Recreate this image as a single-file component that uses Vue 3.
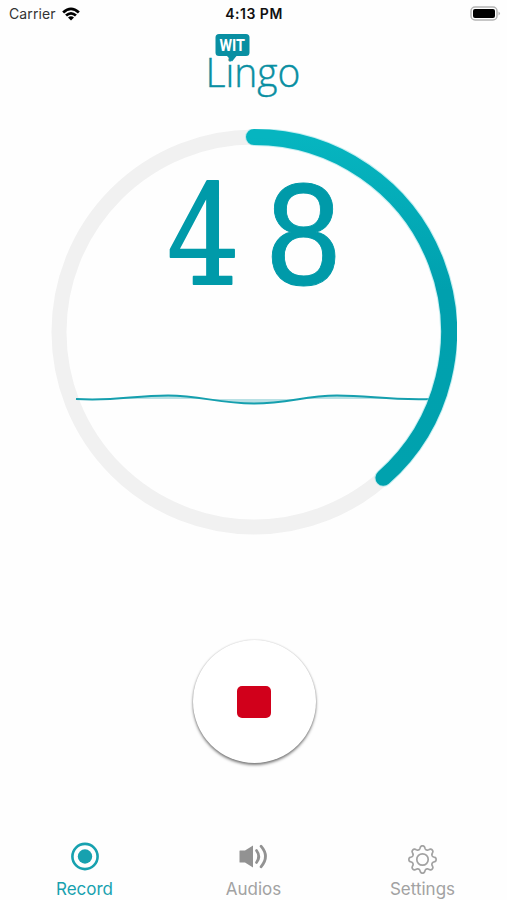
<template>
  <div class="screen">
    <header class="status-bar">
      <div class="carrier">
        <span>Carrier</span>
        <svg class="wifi" viewBox="0 0 18 14">
          <path d="M0.2 4.4 Q9 -3.6 17.8 4.4 L15.9 6.4 Q9 0.2 2.1 6.4 Z" />
          <path d="M3.1 7.5 Q9 2.3 14.9 7.5 L13 9.5 Q9 5.9 5 9.5 Z" />
          <path d="M6 10.5 Q9 8 12 10.5 L9 13.6 Z" />
        </svg>
      </div>
      <div class="clock">4:13 PM</div>
      <div class="battery-wrap">
        <svg class="battery" viewBox="0 0 31 16">
          <rect x="1" y="1" width="26" height="13" rx="4" fill="#fff" stroke="#b4b4b4" stroke-width="1.5" />
          <rect x="3" y="3" width="22" height="9" rx="2" />
          <path d="M28.5 5.5 Q31.5 7.5 28.5 9.5 Z" fill="#b4b4b4" />
        </svg>
      </div>
    </header>

    <svg class="logo" viewBox="0 0 100 72">
      <path class="bubble" d="M15 4 H42 Q45.500 4 45.500 7.500 V22.500 Q45.500 26 42 26 H32.500 L28 31.500 L23 26 H15 Q11.500 26 11.500 22.500 V7.500 Q11.500 4 15 4 Z" />
      <text class="logo-wit" x="15.500" y="20.700" textLength="25.500" lengthAdjust="spacingAndGlyphs">WIT</text>
      <text class="logo-lingo" x="1.500" y="56.500" textLength="95" lengthAdjust="spacingAndGlyphs">Lingo</text>
    </svg>

    <main class="recorder">
      <svg class="dial" viewBox="0 0 406 406">
        <defs>
          <linearGradient id="arc" x1="0" y1="0" x2="0" y2="1">
            <stop offset="0" stop-color="#06b5c0" />
            <stop offset="0.45" stop-color="#00a0ae" />
            <stop offset="1" stop-color="#00a2ae" />
          </linearGradient>
        </defs>
        <circle class="track" cx="203" cy="203" :r="radius" />
        <path class="wave-fill" :d="wave" />
        <path class="wave" :d="wave" />
        <path class="progress-glow" :d="arc" />
        <path class="progress" :d="arc" stroke="url(#arc)" />
        <text class="digit digit-four" transform="translate(116 155) scale(0.83 1)">{{ tens }}</text>
        <text class="digit digit-eight" transform="translate(212.500 155.500) scale(0.88 1)">{{ units }}</text>
      </svg>

      <button class="stop-btn" aria-label="Stop" @click="recording = false">
        <span class="stop-icon"></span>
      </button>
    </main>

    <nav class="tabs">
      <button
        v-for="tab in tabs"
        :key="tab"
        class="tab"
        :class="{ active: activeTab === tab }"
        @click="activeTab = tab"
      >
        <svg v-if="tab === 'Record'" class="tab-icon" viewBox="0 0 30 30">
          <circle cx="15" cy="14.500" r="12.600" fill="none" stroke="currentColor" stroke-width="2.600" />
          <circle cx="15" cy="14.500" r="7.200" fill="currentColor" />
        </svg>
        <svg v-else-if="tab === 'Audios'" class="tab-icon audio" viewBox="0 0 30 30">
          <path d="M1 8.500 H6 L14 3.500 V25.500 L6 20.500 H1 Q0.500 20.500 0.500 20 V9 Q0.500 8.500 1 8.500 Z" fill="currentColor" />
          <path d="M17.500 8.500 Q22 14.500 17.500 20.500 M22 4.200 Q31 14.500 22 24.800" fill="none" stroke="currentColor" stroke-width="2.800" stroke-linecap="round" />
        </svg>
        <svg v-else class="tab-icon" viewBox="0 0 30 30">
          <path :d="gear" fill="none" stroke="currentColor" stroke-width="1.700" stroke-linejoin="round" />
          <circle cx="14.500" cy="17.500" r="5.700" fill="none" stroke="currentColor" stroke-width="1.700" />
        </svg>
        <span>{{ tab }}</span>
      </button>
    </nav>
  </div>
</template>

<script setup>
import { ref, computed } from 'vue'

const tabs = ['Record', 'Audios', 'Settings']
const activeTab = ref('Record')
const recording = ref(true)
const seconds = ref(48)

const radius = 195
const sweep = 138.4

const tens = computed(() => Math.floor(seconds.value / 10))
const units = computed(() => seconds.value % 10)

const arc = computed(() => {
  const angle = (sweep * Math.PI) / 180
  const x = 203 + radius * Math.sin(angle)
  const y = 203 - radius * Math.cos(angle)
  return `M203 ${203 - radius} A${radius} ${radius} 0 0 1 ${x} ${y}`
})

const wave = 'M25 270 C64 272.500 82 266.500 117 266.500 C151 266.500 166 274.500 203 274.500 C239 274.500 252 266.500 286 266.500 C320 266.500 337 271.500 381 270'

const gear = buildGear()

// eight rounded teeth around the hub
function buildGear() {
  const cx = 14.5
  const cy = 17.5
  const points = []
  for (let i = 0; i < 144; i++) {
    const a = (i / 144) * Math.PI * 2
    const r = 12 + 1.6 * Math.tanh(1.5 * Math.cos(8 * a)) / Math.tanh(1.5)
    points.push(`${(cx + r * Math.sin(a)).toFixed(2)} ${(cy - r * Math.cos(a)).toFixed(2)}`)
  }
  return `M${points.join(' L')} Z`
}
</script>

<style>
body {
  margin: 0;
  background: #fff;
}
</style>

<style scoped>
.screen {
  width: 507px;
  height: 900px;
  display: flex;
  flex-direction: column;
  align-items: center;
  overflow: hidden;
  background: #fefefe;
  font-family: Inter, "Liberation Sans", sans-serif;
}

.status-bar {
  width: 100%;
  height: 30px;
  box-sizing: border-box;
  padding: 0 6px 3px 9px;
  display: grid;
  grid-template-columns: 1fr auto 1fr;
  align-items: center;
  font-size: 14px;
  color: #111;
}

.carrier {
  display: flex;
  align-items: center;
  gap: 6px;
  color: #333;
  letter-spacing: 0.1px;
}

.wifi {
  width: 18px;
  height: 14px;
}

.clock {
  font-weight: 600;
  letter-spacing: 0.5px;
  margin-left: -2px;
}

.battery-wrap {
  display: flex;
  justify-content: flex-end;
}

.battery {
  width: 31px;
  height: 16px;
}

.logo {
  width: 100px;
  height: 72px;
  flex: none;
}

.bubble,
.logo-lingo {
  fill: #098fa2;
}

.logo-wit {
  fill: #fff;
  font: 700 16px Roboto, sans-serif;
}

.logo-lingo {
  stroke: #098fa2;
  stroke-width: 0.4;
  font: 300 40px "Open Sans", sans-serif;
}

.recorder {
  display: flex;
  flex-direction: column;
  align-items: center;
  padding: 26.5px 0 0 1px;
}

.dial {
  width: 406px;
  height: 406px;
}

.track {
  fill: none;
  stroke: #f1f1f1;
  stroke-width: 15;
}

.progress,
.progress-glow {
  fill: none;
  stroke-width: 16;
  stroke-linecap: round;
}

.progress-glow {
  stroke: #8be0e6;
  stroke-width: 18;
  opacity: 0.5;
}

.wave {
  fill: none;
  stroke: #159fae;
  stroke-width: 2;
}

.wave-fill {
  fill: #b8e0e4;
}

.digit {
  fill: #009aa9;
  stroke: #009aa9;
  stroke-linejoin: round;
}

.digit-four {
  font: 138px "DejaVu Serif", serif;
  stroke-width: 2;
}

.digit-eight {
  font: 152px "Liberation Mono", monospace;
  stroke-width: 1;
}

.stop-btn {
  width: 123px;
  height: 123px;
  margin-top: 105.5px;
  padding: 0;
  display: flex;
  align-items: center;
  justify-content: center;
  background: #fff;
  border: 0;
  border-radius: 50%;
  box-shadow: 0 2px 3px rgba(0, 0, 0, 0.5), 0 0 2px rgba(0, 0, 0, 0.18);
  cursor: pointer;
}

.stop-icon {
  width: 34px;
  height: 32px;
  border-radius: 5px;
  background: #d1001b;
}

.tabs {
  width: 100%;
  margin-top: auto;
  height: 58px;
  display: grid;
  grid-template-columns: repeat(3, 169px);
}

.tab {
  display: flex;
  flex-direction: column;
  align-items: center;
  gap: 7px;
  padding: 0;
  border: 0;
  background: none;
  color: #a2a2a2;
  font: 17px/20px Inter, "Liberation Sans", sans-serif;
  cursor: pointer;
}

.tab-icon {
  width: 30px;
  height: 30px;
  overflow: visible;
}

.tab-icon.audio {
  color: #929292;
}

.tab.active {
  color: #17a1af;
}
</style>
